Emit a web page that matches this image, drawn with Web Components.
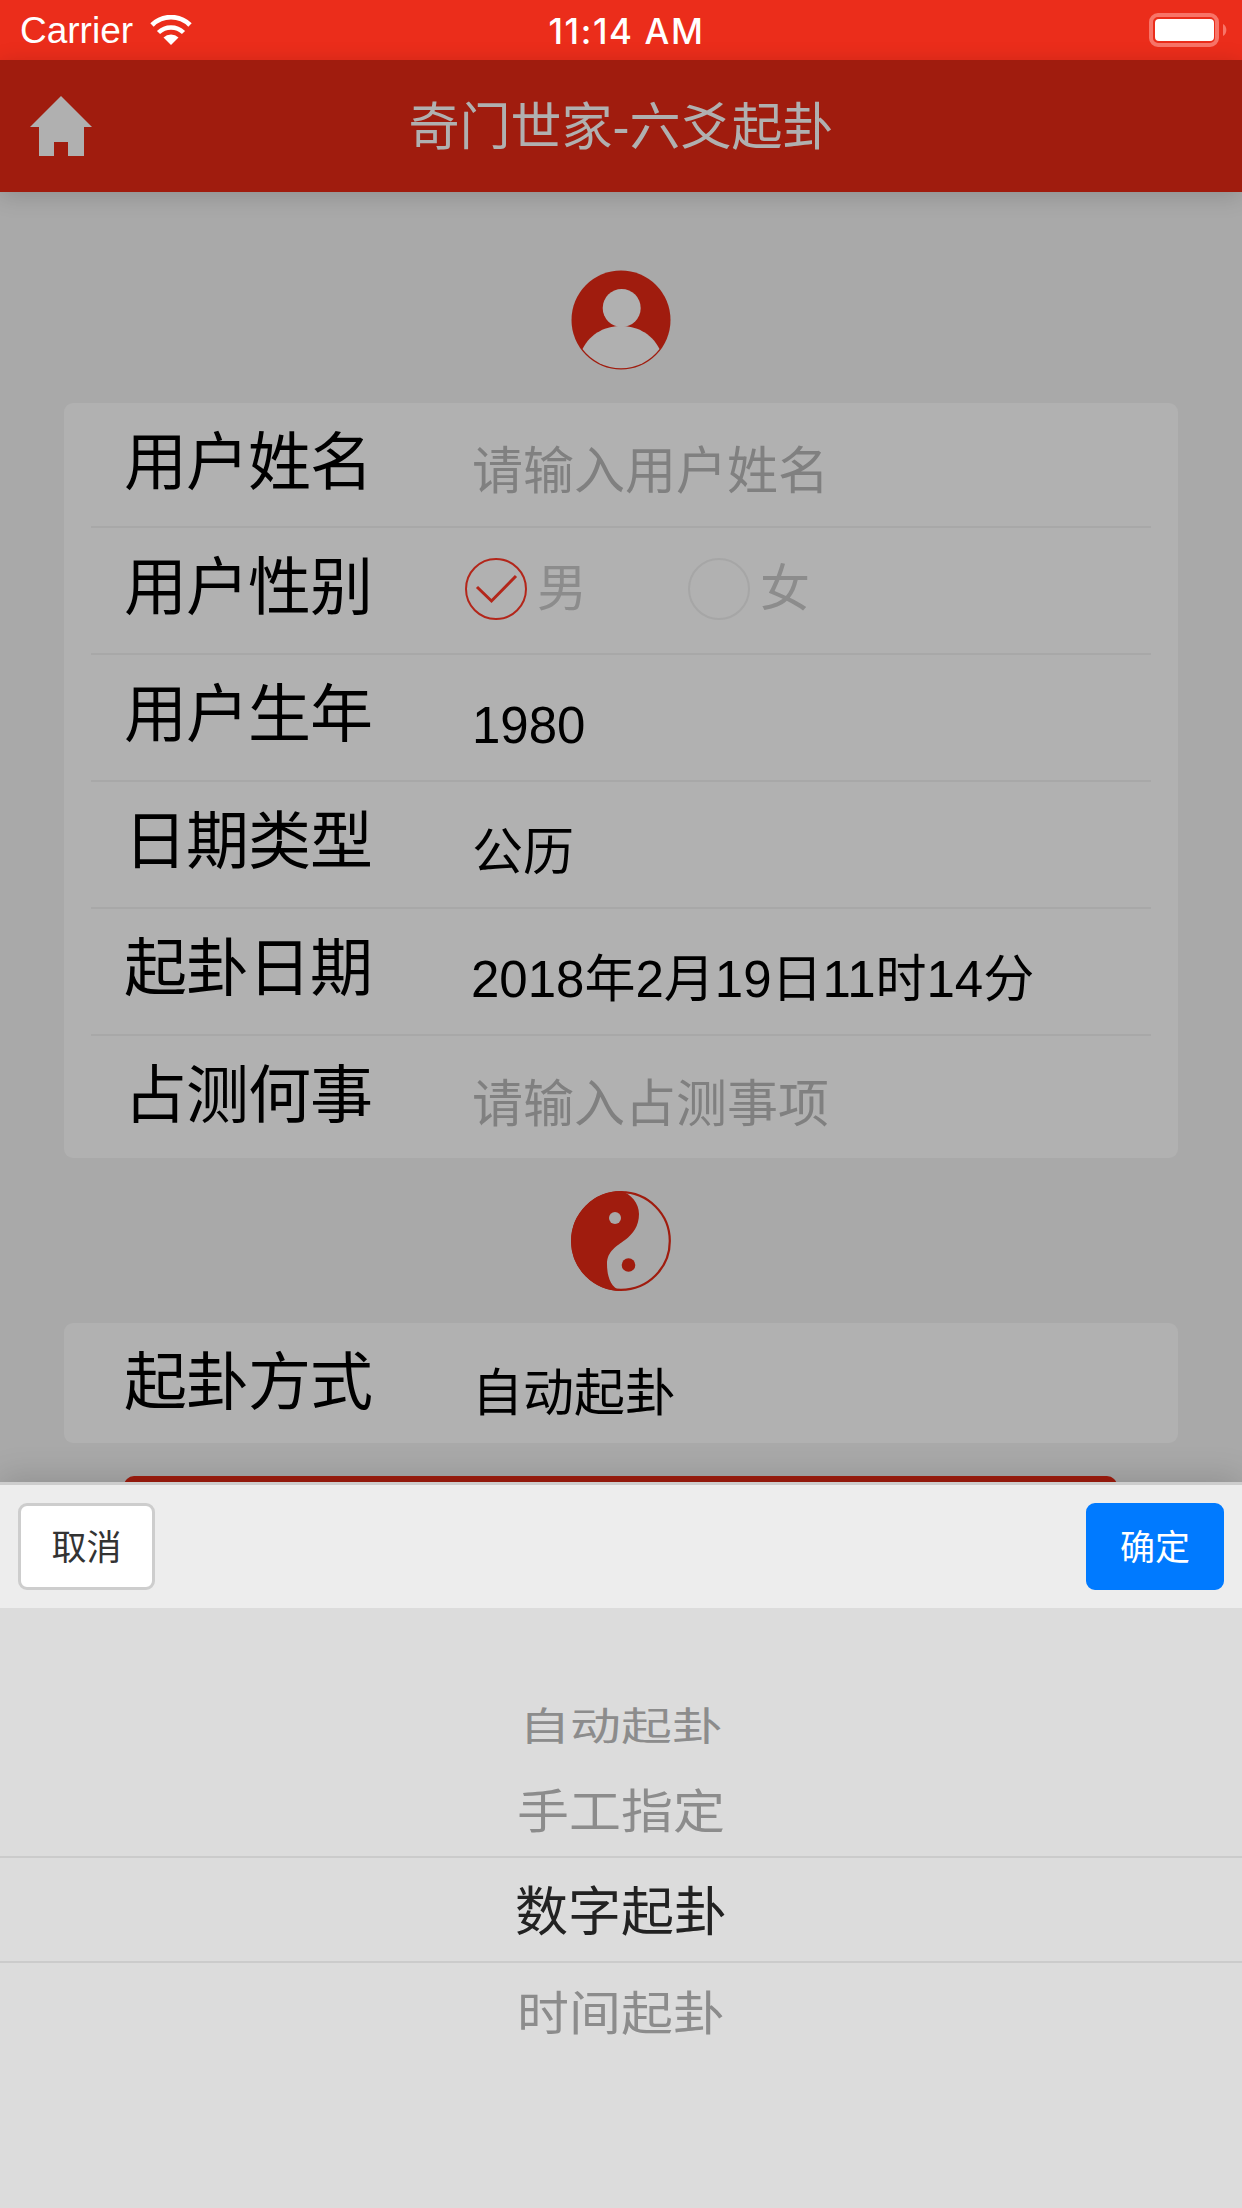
<!DOCTYPE html>
<html lang="zh">
<head>
<meta charset="utf-8">
<title>奇门世家-六爻起卦</title>
<style>
	html, body { margin: 0; padding: 0; }
	body {
		width: 1242px;
		height: 2208px;
		overflow: hidden;
		background: #a9a9a9;
		font-family: "Liberation Sans", "Noto Sans CJK SC", sans-serif;
	}
</style>
</head>
<body>
<qm-app>
	<qm-status-bar slot="top"></qm-status-bar>
	<qm-nav-bar slot="top" title-text="奇门世家-六爻起卦"></qm-nav-bar>

	<qm-emblem kind="user"></qm-emblem>
	<qm-card>
		<qm-row label="用户姓名" placeholder first><span slot="value">请输入用户姓名</span></qm-row>
		<qm-row label="用户性别">
			<qm-radio-group slot="raw">
				<qm-radio checked>男</qm-radio>
				<qm-radio>女</qm-radio>
			</qm-radio-group>
		</qm-row>
		<qm-row label="用户生年"><span slot="value">1980</span></qm-row>
		<qm-row label="日期类型"><span slot="value">公历</span></qm-row>
		<qm-row label="起卦日期"><span slot="value" style="margin-left:-1px">2018年2月19日11时14分</span></qm-row>
		<qm-row label="占测何事" placeholder last><span slot="value">请输入占测事项</span></qm-row>
	</qm-card>
	<qm-emblem kind="taiji"></qm-emblem>
	<qm-card>
		<qm-row label="起卦方式" first last><span slot="value">自动起卦</span></qm-row>
	</qm-card>
	<qm-submit></qm-submit>

	<qm-sheet slot="sheet">
		<qm-button slot="cancel">取消</qm-button>
		<qm-button slot="confirm" primary>确定</qm-button>
		<qm-wheel-item tilt="far">自动起卦</qm-wheel-item>
		<qm-wheel-item tilt="near">手工指定</qm-wheel-item>
		<qm-wheel-item tilt="selected">数字起卦</qm-wheel-item>
		<qm-wheel-item tilt="below">时间起卦</qm-wheel-item>
	</qm-sheet>
</qm-app>

<script>
(function() {
	const CJK = '"Liberation Sans", "Noto Sans CJK SC", sans-serif';

	function define(name, html, extra) {
		let template = document.createElement("template");
		template.innerHTML = html;
		class Element_ extends HTMLElement {
			constructor() {
				super();
				this._shadowRoot = this.attachShadow({mode: "open"});
				this._shadowRoot.appendChild(template.content.cloneNode(true));
			}
			connectedCallback() {
				if (extra) extra.call(this, this._shadowRoot);
			}
		}
		customElements.define(name, Element_);
	}

	define("qm-app", `
		<style>
			:host { display: flex; flex-direction: column; width: 1242px; height: 2208px; }
			.top { display: block; position: relative; z-index: 2; }
			main {
				height: 1290px;
				overflow: hidden;
				display: flex;
				flex-direction: column;
				background: #a9a9a9;
			}
			.sheet { display: block; position: relative; z-index: 3; flex: 1; }
		</style>
		<div class="top"><slot name="top"></slot></div>
		<main><slot></slot></main>
		<div class="sheet"><slot name="sheet"></slot></div>
	`);

	define("qm-status-bar", `
		<style>
			:host {
				display: flex;
				align-items: center;
				justify-content: space-between;
				height: 60px;
				background: #eb2d1b;
				color: #fff;
				position: relative;
				padding: 0 15px 0 20px;
			}
			.left { display: flex; align-items: center; gap: 17px; font: 37px/60px "Liberation Sans", sans-serif; }
			.left span { padding-top: 2px; }
			.time {
				position: absolute;
				left: 11px; right: 0; top: 0;
				text-align: center;
				font: 500 35px/62px Inter, sans-serif;
				letter-spacing: 1.6px;
			}
			svg { display: block; }
		</style>
		<div class="left">
			<span>Carrier</span>
			<svg width="42" height="30" viewBox="0 0 42 30">
				<path d="M21 30 L13.5 22.5 A11 11 0 0 1 28.5 22.5 Z" fill="#fff"/>
				<path d="M8.5 17.5 A18 18 0 0 1 33.5 17.5" fill="none" stroke="#fff" stroke-width="4.5"/>
				<path d="M2 10 A27 27 0 0 1 40 10" fill="none" stroke="#fff" stroke-width="4.8"/>
			</svg>
		</div>
		<div class="time">11:14 AM</div>
		<svg width="78" height="34" viewBox="0 0 78 34">
			<rect x="2" y="2" width="66" height="30" rx="7" fill="none" stroke="#f87468" stroke-width="4"/>
			<rect x="6" y="6" width="59" height="22" rx="4" fill="#fff"/>
			<path d="M74 11 A7 7 0 0 1 74 23 Z" fill="#f87468"/>
		</svg>
	`);

	define("qm-nav-bar", `
		<style>
			:host {
				display: flex;
				align-items: center;
				height: 132px;
				background: #a01c0e;
				box-shadow: 0 4px 22px rgba(0,0,0,.16);
				position: relative;
			}
			svg { display: block; margin-left: 30px; flex: none; }
			h1 {
				position: absolute;
				left: 0; right: 0; top: 0;
				margin: 0;
				text-align: center;
				font: 400 51px/136px ${CJK};
				color: #b0b0b0;
			}
		</style>
		<svg width="62" height="60" viewBox="0 0 62 60">
			<path d="M31 0 L62 31 L54 31 L54 60 L38 60 L38 46 L24 46 L24 60 L9 60 L9 31 L0 31 Z" fill="#b0b0b0"/>
		</svg>
		<h1></h1>
	`, function(root) {
		root.querySelector("h1").textContent = this.getAttribute("title-text");
	});

	const EMBLEMS = {
		user: `<svg width="100" height="100" viewBox="0 0 100 100">
			<circle cx="50" cy="50" r="49.5" fill="#a01c0e"/>
			<circle cx="50.7" cy="38" r="19" fill="#b0b0b0"/>
			<path d="M11.5 79 C20 62 36 56 50 56 C64 56 80 62 88.5 79 A48 48 0 0 1 11.5 79 Z" fill="#b0b0b0"/>
		</svg>`,
		taiji: `<svg width="100" height="100" viewBox="0 0 100 100">
			<circle cx="50" cy="50" r="48.8" fill="#a9a9a9" stroke="#a01c0e" stroke-width="2.2"/>
			<path d="M50 0 A50 50 0 0 0 50 100 C38 96 36 82 36 73 C36 60 46 55 54 49 C62 43 68 35 68 23 C68 12 60 3 50 0 Z" fill="#a01c0e"/>
			<circle cx="44" cy="27" r="6" fill="#a9a9a9"/>
			<circle cx="57.5" cy="74" r="6.8" fill="#a01c0e"/>
		</svg>`
	};

	define("qm-emblem", `
		<style>
			:host { display: flex; justify-content: center; margin: 33px 0 32px; }
			:host([kind="user"]) { margin: 78px 0 33px; }
			svg { display: block; }
		</style>
		<div id="box"></div>
	`, function(root) {
		root.getElementById("box").innerHTML = EMBLEMS[this.getAttribute("kind")];
	});

	define("qm-card", `
		<style>
			:host {
				display: block;
				margin: 0 64px;
				background: #b1b1b1;
				border-radius: 9px;
			}
		</style>
		<slot></slot>
	`);

	define("qm-row", `
		<style>
			:host {
				display: flex;
				height: 125px;
				margin: 0 27px;
				align-items: flex-start;
				box-sizing: content-box;
				border-bottom: 2.5px solid #a8a8a8;
			}
			:host([first]) { height: 122.5px; }
			:host([last]) { border-bottom: 0; height: 122px; }
			:host([first][last]) { height: 120px; }
			.label {
				width: 248px;
				margin-left: 33px;
				flex: none;
				font: 400 63px/119px ${CJK};
				letter-spacing: -1px;
				color: #000;
				white-space: nowrap;
			}
			.value {
				margin-left: 100px;
				font: 400 51px/141px ${CJK};
				color: #000;
				white-space: nowrap;
			}
			:host([placeholder]) .value { color: #808080; line-height: 137px; }
			.raw { margin-left: 93px; }
		</style>
		<div class="label"></div>
		<div class="value"><slot name="value"></slot></div>
		<div class="raw"><slot name="raw"></slot></div>
	`, function(root) {
		root.querySelector(".label").textContent = this.getAttribute("label");
		if (this.querySelector('[slot="raw"]')) root.querySelector(".value").style.display = "none";
		else root.querySelector(".raw").style.display = "none";
	});

	define("qm-radio-group", `
		<style>
			:host { display: flex; gap: 101px; height: 125px; align-items: center; margin-top: -1px; }
		</style>
		<slot></slot>
	`);

	define("qm-radio", `
		<style>
			:host {
				display: flex;
				align-items: center;
				gap: 10px;
				font: 400 50px/62px ${CJK};
				color: #8c8c8c;
			}
			svg { display: block; flex: none; }
			.mark { display: none; }
			:host([checked]) .mark { display: inline; }
			.ring { stroke: #a6a6a6; }
			:host([checked]) .ring { stroke: #b3261a; }
		</style>
		<svg width="62" height="62" viewBox="0 0 62 62">
			<circle class="ring" cx="31" cy="31" r="30" fill="none" stroke-width="2"/>
			<path class="mark" d="M12 29 L26.5 43 L51 18" fill="none" stroke="#b3261a" stroke-width="3"/>
		</svg>
		<slot></slot>
	`);

	define("qm-submit", `
		<style>
			:host {
				display: block;
				flex: none;
				height: 100px;
				margin: 33px 125px 0 124px;
				background: #a01c0e;
				border-radius: 10px;
			}
		</style>
	`);

	define("qm-sheet", `
		<style>
			:host {
				display: block;
				height: 726px;
				background: #dcdcdc;
				box-shadow: 0 -6px 30px rgba(0,0,0,.14);
			}
			.bar {
				display: flex;
				justify-content: space-between;
				align-items: center;
				box-sizing: border-box;
				height: 126px;
				padding: 18px;
				border-top: 3px solid #cdcdcd;
				background: #ededed;
			}
			.wheel { display: block; padding-top: 72px; }
		</style>
		<div class="bar">
			<slot name="cancel"></slot>
			<slot name="confirm"></slot>
		</div>
		<div class="wheel"><slot></slot></div>
	`);

	define("qm-button", `
		<style>
			:host {
				display: block;
				box-sizing: border-box;
				width: 137px;
				height: 87px;
				border: 3px solid #cdcdcd;
				border-radius: 9px;
				background: #fff;
				color: #333;
				text-align: center;
				font: 400 35px/83px ${CJK};
			}
			:host([primary]) {
				width: 138px;
				border-color: #007aff;
				background: #007aff;
				color: #fff;
			}
		</style>
		<slot></slot>
	`);

	define("qm-wheel-item", `
		<style>
			:host {
				display: block;
				text-align: center;
				font: 400 53px/1 ${CJK};
				color: #8c8c8c;
				white-space: nowrap;
			}
			:host([tilt="far"]) { height: 80px; }
			:host([tilt="near"]) { height: 96px; }
			:host([tilt="selected"]) {
				height: 103px;
				color: #222;
				border-top: 2px solid #cbcbcb;
				border-bottom: 2px solid #cbcbcb;
			}
			span { display: inline-block; }
			:host([tilt="far"]) span { transform: scale(.96, .72); line-height: 94px; }
			:host([tilt="near"]) span { transform: scale(.98, .88); line-height: 104px; }
			:host([tilt="selected"]) span { line-height: 109px; }
			:host([tilt="below"]) span { transform: scale(.98, .88); line-height: 102px; }
		</style>
		<span><slot></slot></span>
	`);
})();
</script>
</body>
</html>
